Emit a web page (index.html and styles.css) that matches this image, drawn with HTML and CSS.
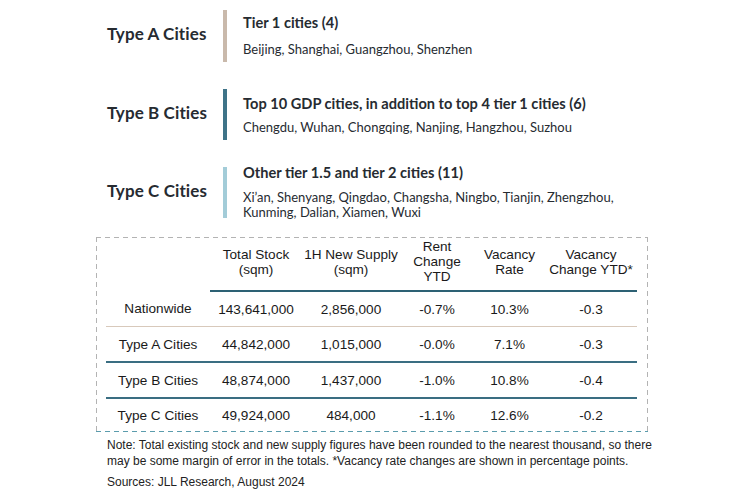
FILE: index.html
```html
<!DOCTYPE html>
<html lang="en">
<head>
<meta charset="utf-8">
<title>China office market by city type</title>
<link rel="stylesheet" href="styles.css">
</head>
<body>
<div class="page">
  <section class="types">
    <div class="type type-a">
      <div class="type-label">Type A Cities</div>
      <div class="type-bar"></div>
      <div class="type-body">
        <div class="type-title">Tier 1 cities (4)</div>
        <div class="type-list">Beijing, Shanghai, Guangzhou, Shenzhen</div>
      </div>
    </div>
    <div class="type type-b">
      <div class="type-label">Type B Cities</div>
      <div class="type-bar"></div>
      <div class="type-body">
        <div class="type-title">Top 10 GDP cities, in addition to top 4 tier 1 cities (6)</div>
        <div class="type-list">Chengdu, Wuhan, Chongqing, Nanjing, Hangzhou, Suzhou</div>
      </div>
    </div>
    <div class="type type-c">
      <div class="type-label">Type C Cities</div>
      <div class="type-bar"></div>
      <div class="type-body">
        <div class="type-title">Other tier 1.5 and tier 2 cities (11)</div>
        <div class="type-list">Xi’an, Shenyang, Qingdao, Changsha, Ningbo, Tianjin, Zhengzhou,<br>Kunming, Dalian, Xiamen, Wuxi</div>
      </div>
    </div>
  </section>

  <div class="data-box">
    <table class="data">
      <colgroup>
        <col class="c1"><col class="c2"><col class="c3"><col class="c4"><col class="c5"><col class="c6">
      </colgroup>
      <thead>
        <tr>
          <th class="blank"></th>
          <th>Total Stock<br>(sqm)</th>
          <th>1H New Supply<br>(sqm)</th>
          <th>Rent<br>Change<br>YTD</th>
          <th>Vacancy<br>Rate</th>
          <th>Vacancy<br>Change YTD*</th>
        </tr>
      </thead>
      <tbody>
        <tr class="row-nation">
          <td>Nationwide</td><td>143,641,000</td><td>2,856,000</td><td>-0.7%</td><td>10.3%</td><td>-0.3</td>
        </tr>
        <tr class="row-teal">
          <td>Type A Cities</td><td>44,842,000</td><td>1,015,000</td><td>-0.0%</td><td>7.1%</td><td>-0.3</td>
        </tr>
        <tr class="row-teal">
          <td>Type B Cities</td><td>48,874,000</td><td>1,437,000</td><td>-1.0%</td><td>10.8%</td><td>-0.4</td>
        </tr>
        <tr class="row-last">
          <td>Type C Cities</td><td>49,924,000</td><td>484,000</td><td>-1.1%</td><td>12.6%</td><td>-0.2</td>
        </tr>
      </tbody>
    </table>
  </div>

  <p class="note">Note: Total existing stock and new supply figures have been rounded to the nearest thousand, so there<br>may be some margin of error in the totals. *Vacancy rate changes are shown in percentage points.</p>
  <p class="source">Sources: JLL Research, August 2024</p>
</div>
</body>
</html>
```

FILE: styles.css
```css
html, body {
  margin: 0;
  padding: 0;
  background: #ffffff;
}

.page {
  width: 744px;
  height: 503px;
  overflow: hidden;
  font-family: "Liberation Sans", Arial, sans-serif;
  color: #1f1f1f;
}

/* ---------- city type legend ---------- */
.types {
  display: flex;
  flex-direction: column;
  gap: 27px;
  padding: 10px 0 0 107px;
  font-family: "Lato", "Noto Sans", sans-serif;
  color: #262b31;
}

.type {
  display: flex;
  height: 51px;
}

.type-a {
  height: 52px;
}

.type-label {
  width: 116px;
  display: flex;
  align-items: center;
  padding-bottom: 5px;
  box-sizing: border-box;
  font-size: 17px;
  font-weight: 700;
  letter-spacing: 0.1px;
}

.type-bar {
  width: 4px;
  flex: none;
}

.type-a .type-bar { background: #c9b9ab; }
.type-b .type-bar { background: #3e7388; }
.type-c .type-bar { background: #a3ccd8; }

.type-body {
  padding-left: 16px;
  display: flex;
  flex-direction: column;
}

.type-title {
  font-size: 14.6px;
  font-weight: 700;
  line-height: 18px;
}

.type-list {
  font-size: 13px;
  line-height: 16px;
}

.type-a .type-body { padding-top: 4px; gap: 9px; }
.type-b .type-body { padding-top: 6px; gap: 6px; }
.type-c .type-body { margin-top: -3px; gap: 8px; }
.type-c .type-list { line-height: 15px; }

/* ---------- data table ---------- */
.data-box {
  margin: 19px 96px 0 96px;
  padding: 1px 11px 1px 10px;
  background-image:
    repeating-linear-gradient(to right, #b3b3b3 0 5px, transparent 5px 9px),
    repeating-linear-gradient(to right, #5b9cad 0 5px, transparent 5px 9px),
    repeating-linear-gradient(to bottom, #b3b3b3 0 5px, transparent 5px 9px),
    repeating-linear-gradient(to bottom, #b3b3b3 0 5px, transparent 5px 9px);
  background-size: 100% 1px, 100% 1px, 1px 100%, 1px 100%;
  background-position: left top, left bottom, left top, right top;
  background-repeat: no-repeat;
}

.data {
  width: 531px;
  table-layout: fixed;
  border-collapse: collapse;
  font-size: 13.6px;
  color: #1a1a1a;
}

.c1 { width: 104px; }
.c2 { width: 92px; }
.c3 { width: 98px; }
.c4 { width: 74px; }
.c5 { width: 71px; }
.c6 { width: 92px; }

.data th {
  font-weight: 400;
  line-height: 15px;
  padding: 1px 0 6px;
  vertical-align: middle;
  text-align: center;
  border-bottom: 2px solid #2d6174;
}

.data th.blank {
  border-bottom: none;
}

.data td {
  height: 34px;
  padding: 0;
  text-align: center;
  vertical-align: middle;
  line-height: 15px;
}

.row-nation td {
  border-bottom: 1px solid #d8c9bb;
}

.row-teal td {
  border-bottom: 2px solid #3a6e82;
}

.row-last td {
  height: 32px;
}

/* ---------- notes ---------- */
.note {
  margin: 6px 0 0 107px;
  font-size: 12px;
  line-height: 15.5px;
  color: #222;
}

.source {
  margin: 5px 0 0 107px;
  font-size: 12px;
  line-height: 16px;
  color: #222;
}
```
